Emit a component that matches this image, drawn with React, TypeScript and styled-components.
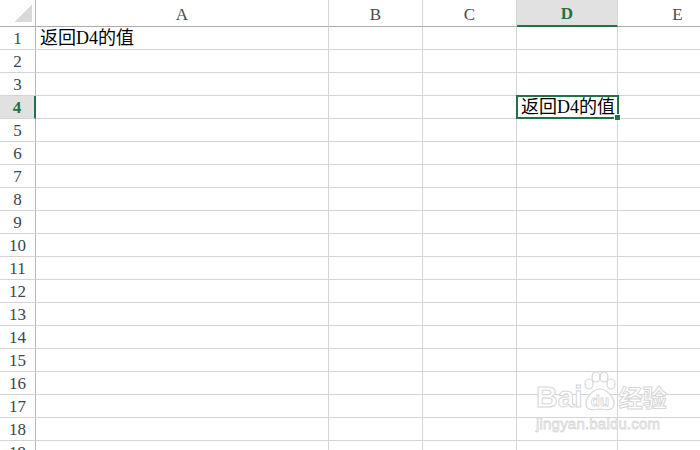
import { FC, Fragment } from 'react';
import styled, { createGlobalStyle } from 'styled-components';

const GlobalStyle = createGlobalStyle`
  html, body {
    margin: 0;
    padding: 0;
    background: #ffffff;
    overflow: hidden;
  }
`;

const COLUMNS = [
  { key: 'A', width: 293 },
  { key: 'B', width: 94 },
  { key: 'C', width: 94 },
  { key: 'D', width: 101 },
  { key: 'E', width: 120 },
];
const ROW_COUNT = 19;
const ACTIVE = { col: 'D', row: 4 };

const green = '#217346';

const Sheet = styled.div`
  position: relative;
  width: 700px;
  height: 450px;
  overflow: hidden;
  display: grid;
  grid-template-columns: 36px ${COLUMNS.map((c) => c.width + 'px').join(' ')};
  grid-template-rows: 27px repeat(${ROW_COUNT}, 23px);
  font-family: 'Liberation Serif', 'Noto Sans CJK SC', serif;
`;

const Corner = styled.div`
  position: relative;
  border-right: 1px solid #b7b7b7;
  border-bottom: 1px solid #ababab;
  box-sizing: border-box;
  display: flex;
  justify-content: flex-end;
  align-items: flex-end;
  padding: 0 3px 4px 0;

  &::after {
    content: '';
    width: 18px;
    height: 18px;
    background: linear-gradient(to bottom right, transparent 50%, #dadada 50%);
  }
`;

const ColHeader = styled.div<{ active: boolean }>`
  box-sizing: border-box;
  display: flex;
  justify-content: center;
  align-items: center;
  padding-top: 3px;
  font-size: 17px;
  color: ${(p) => (p.active ? green : '#444b55')};
  font-weight: ${(p) => (p.active ? 700 : 400)};
  background: ${(p) => (p.active ? '#e1e1e1' : '#ffffff')};
  border-right: 1px solid #d4d4d4;
  border-bottom: ${(p) => (p.active ? `2px solid ${green}` : '1px solid #ababab')};
`;

const RowHeader = styled.div<{ active: boolean }>`
  box-sizing: border-box;
  display: flex;
  justify-content: center;
  align-items: center;
  padding-top: 1px;
  font-size: 17px;
  color: ${(p) => (p.active ? green : '#3d4450')};
  font-weight: ${(p) => (p.active ? 700 : 400)};
  background: ${(p) => (p.active ? '#e1e1e1' : '#ffffff')};
  border-bottom: 1px solid #d4d4d4;
  border-right: ${(p) => (p.active ? `2px solid ${green}` : '1px solid #b7b7b7')};
`;

const Cell = styled.div`
  position: relative;
  box-sizing: border-box;
  border-right: 1px solid #d4d4d4;
  border-bottom: 1px solid #d4d4d4;
  padding: 0 0 0 4px;
  white-space: nowrap;
  overflow: visible;
  display: flex;
  align-items: flex-end;
  font-size: 18px;
  line-height: 22px;
  color: #000000;
`;

const CellText = styled.span`
  position: relative;
  z-index: 1;
  font-family: 'Liberation Serif', 'Noto Sans CJK SC', serif;
`;

const Selection = styled.div`
  position: absolute;
  left: -1px;
  top: -1px;
  right: -2px;
  bottom: -1px;
  border: 2px solid ${green};
  z-index: 2;
  pointer-events: none;

  &::after {
    content: '';
    position: absolute;
    right: -4px;
    bottom: -4px;
    width: 5px;
    height: 5px;
    background: ${green};
    border: 1px solid #ffffff;
  }
`;

const Watermark = styled.div`
  position: absolute;
  left: 536px;
  top: 372px;
  display: flex;
  flex-direction: column;
  align-items: flex-start;
  color: #ffffff;
  pointer-events: none;
  font-family: 'Liberation Sans', Arial, sans-serif;
  z-index: 3;
`;

const LogoLine = styled.div`
  display: flex;
  align-items: flex-end;
  height: 40px;
`;

const LogoWord = styled.span`
  font-size: 30px;
  font-weight: 700;
  line-height: 30px;
  -webkit-text-stroke: 1px #d6d6d6;
`;

const LogoCn = styled.span`
  font-family: 'Noto Sans CJK SC', sans-serif;
  font-size: 24px;
  font-weight: 700;
  line-height: 30px;
  margin-left: 2px;
  -webkit-text-stroke: 1px #d6d6d6;
`;

const SiteLine = styled.span`
  margin-top: 3px;
  font-size: 15px;
  letter-spacing: 0.2px;
  -webkit-text-stroke: 0.8px #d8d8d8;
`;

const Paw: FC = () => (
  <svg width="34" height="40" viewBox="0 0 34 40" fill="#ffffff" stroke="#d6d6d6" strokeWidth="1.2">
    <ellipse cx="6" cy="12" rx="4" ry="5" />
    <ellipse cx="13" cy="5" rx="4" ry="5" />
    <ellipse cx="21" cy="5" rx="4" ry="5" />
    <ellipse cx="28" cy="12" rx="4" ry="5" />
    <path d="M17 17 C 10 17, 2 26, 3 33 C 4 39, 12 38, 17 37 C 22 38, 30 39, 31 33 C 32 26, 24 17, 17 17 Z" />
    <text
      x="17"
      y="34"
      textAnchor="middle"
      fontSize="15"
      fontWeight="700"
      fontFamily="Liberation Sans, Arial, sans-serif"
      fill="#ffffff"
      stroke="#d6d6d6"
      strokeWidth="0.8"
    >
      du
    </text>
  </svg>
);

const content: Record<string, string> = {
  A1: '返回D4的值',
  D4: '返回D4的值',
};

const App: FC = () => {
  const rows = Array.from({ length: ROW_COUNT }, (_, i) => i + 1);

  return (
    <>
      <GlobalStyle />
      <Sheet>
        <Corner />
        {COLUMNS.map((c) => (
          <ColHeader key={c.key} active={c.key === ACTIVE.col}>
            {c.key}
          </ColHeader>
        ))}
        {rows.map((r) => (
          <Fragment key={r}>
            <RowHeader active={r === ACTIVE.row}>{r}</RowHeader>
            {COLUMNS.map((c) => {
              const id = c.key + r;
              return (
                <Cell key={id}>
                  {content[id] && <CellText>{content[id]}</CellText>}
                  {c.key === ACTIVE.col && r === ACTIVE.row && <Selection />}
                </Cell>
              );
            })}
          </Fragment>
        ))}
        <Watermark>
          <LogoLine>
            <LogoWord>Bai</LogoWord>
            <Paw />
            <LogoCn>经验</LogoCn>
          </LogoLine>
          <SiteLine>jingyan.baidu.com</SiteLine>
        </Watermark>
      </Sheet>
    </>
  );
};

export default App;
